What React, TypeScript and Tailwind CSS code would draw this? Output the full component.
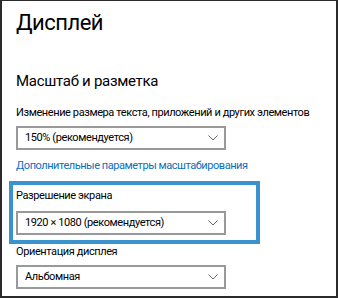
// Выпадающий список в стиле параметров Windows
function Dropdown({ value, className = '' }: { value: string; className?: string }) {
  return (
    <div
      className={`flex h-[24px] w-[210px] items-center justify-between border-2 border-[#999999] bg-white pl-[7px] pr-[6px] ${className}`}
    >
      <span className="text-[11px] leading-[12px] tracking-[-0.4px] text-black">{value}</span>
      <svg width="10" height="6" viewBox="0 0 10 6" className="text-[#666666]">
        <polyline points="0.5,0.5 5,5 9.5,0.5" fill="none" stroke="currentColor" strokeWidth="1" />
      </svg>
    </div>
  );
}

export default function App() {
  return (
    <div
      className="h-[298px] w-[338px] overflow-hidden border-x-2 border-b-2 border-t border-[#2b2b2b] bg-white pl-[14px] text-black"
      style={{ fontFamily: 'Roboto, "Noto Sans", sans-serif' }}
    >
      {/* Заголовок страницы */}
      <h1 className="mt-[11px] text-[22px] font-normal leading-[22px] tracking-[-0.5px]">Дисплей</h1>

      <h2 className="mt-[40px] text-[15px] font-normal leading-[15px] tracking-[-0.3px]">Масштаб и разметка</h2>

      <div className="mt-[18px] text-[11px] leading-[12px] tracking-[-0.4px]">
        Изменение размера текста, приложений и других элементов
      </div>
      <Dropdown value="150% (рекомендуется)" className="mt-[7px]" />

      <div className="mt-[10px] text-[11px] leading-[12px] tracking-[-0.45px] text-[#0a6fc2]">
        Дополнительные параметры масштабирования
      </div>

      {/* Выделенный блок разрешения */}
      <div className="-ml-[7px] mt-[9px] w-[251px] border-4 border-[#3a93cc] px-[3px] pb-[5px] pt-[5px]">
        <div className="text-[11px] leading-[12px] tracking-[-0.4px]">Разрешение экрана</div>
        <Dropdown value="1920 × 1080 (рекомендуется)" className="mt-[9px]" />
      </div>

      <div className="mt-[2px] text-[11px] leading-[12px] tracking-[-0.4px]">Ориентация дисплея</div>
      <Dropdown value="Альбомная" className="mt-[7px]" />
    </div>
  );
}
